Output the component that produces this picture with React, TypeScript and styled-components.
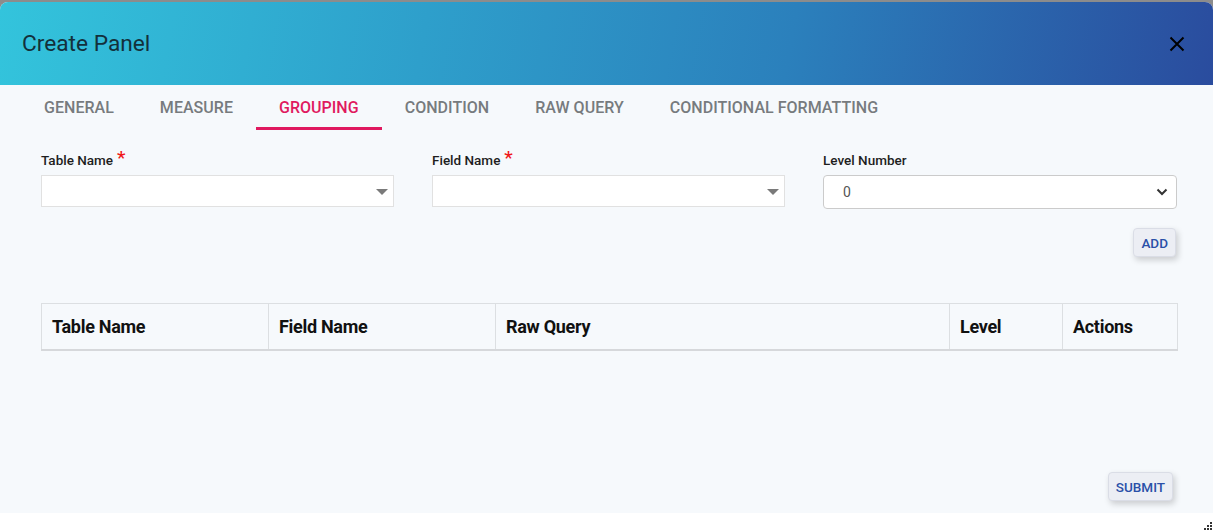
import React from "react";
import styled, { createGlobalStyle } from "styled-components";

const Global = createGlobalStyle`
  html, body { margin: 0; padding: 0; }
  body { font-family: Roboto, "Liberation Sans", Arial, sans-serif; background: #fff; }
  * { box-sizing: border-box; }
`;

const Page = styled.div`
  width: 1213px;
  height: 531px;
  display: flex;
  flex-direction: column;
  background: linear-gradient(to bottom, #8c8c8c 0, #8c8c8c 20px, #ffffff 20px);
  overflow: hidden;
`;

const Dialog = styled.div`
  margin-top: 2px;
  height: 511px;
  display: flex;
  flex-direction: column;
  border-radius: 8px 8px 0 0;
  overflow: hidden;
  background: #f6f9fc;
`;

const Header = styled.div`
  height: 83px;
  flex: none;
  display: flex;
  align-items: center;
  justify-content: space-between;
  padding: 0 24px 0 22px;
  background: linear-gradient(100deg, #33c4dc 0%, #2e9fcb 35%, #2b80bc 65%, #2a4c9e 100%);
`;

const Title = styled.h1`
  margin: 0;
  font-size: 22.7px;
  font-weight: 400;
  color: #13303b;
`;

const CloseButton = styled.button`
  border: 0;
  background: transparent;
  padding: 0;
  width: 24px;
  height: 24px;
  display: flex;
  align-items: center;
  justify-content: center;
  cursor: pointer;
`;

const TabBar = styled.div`
  height: 45px;
  flex: none;
  display: flex;
  padding-left: 21px;
`;

const Tab = styled.div<{ $active?: boolean }>`
  display: flex;
  align-items: center;
  padding: 2px 23px 0;
  font-size: 16px;
  font-weight: 500;
  letter-spacing: 0.03px;
  text-transform: uppercase;
  color: ${(p) => (p.$active ? "#e0195f" : "#777b7e")};
  border-bottom: 3px solid ${(p) => (p.$active ? "#e0195f" : "transparent")};
`;

const Content = styled.div`
  flex: 1;
  display: flex;
  flex-direction: column;
  padding: 22px 36px 12px 41px;
`;

const FormGrid = styled.div`
  display: grid;
  grid-template-columns: 353px 353px 354px;
  column-gap: 38px;
`;

const Field = styled.div`
  display: flex;
  flex-direction: column;
`;

const Label = styled.label`
  height: 23px;
  font-size: 13.5px;
  font-weight: 500;
  color: #1e1e1e;
  display: flex;
  align-items: flex-start;
  gap: 4px;
`;

const Star = styled.span`
  color: #f01818;
  font-size: 19px;
  line-height: 12px;
`;

const ComboBox = styled.div`
  height: 32px;
  background: #fff;
  border: 1px solid #e1e1e1;
  display: flex;
  align-items: center;
  justify-content: flex-end;
  padding-right: 4px;
`;

const Caret = styled.span`
  width: 0;
  height: 0;
  border-left: 6px solid transparent;
  border-right: 6px solid transparent;
  border-top: 6px solid #7a7a7a;
  margin-right: 1px;
  margin-top: 1px;
`;

const SelectBox = styled.div`
  height: 34px;
  background: #fff;
  border: 1px solid #cbcbcb;
  border-radius: 4px;
  display: flex;
  align-items: center;
  justify-content: space-between;
  padding: 0 8px 0 19px;
  font-size: 14px;
  color: #555;
`;

const ActionRow = styled.div<{ $top: number; $right: number }>`
  display: flex;
  justify-content: flex-end;
  margin-top: ${(p) => p.$top}px;
  padding-right: ${(p) => p.$right}px;
`;

const SmallButton = styled.button`
  height: 29px;
  padding: 0 7px;
  border: 1px solid #dadde6;
  border-radius: 4px;
  background: #eceef4;
  color: #2a50a8;
  font-family: Roboto, "Liberation Sans", Arial, sans-serif;
  font-size: 13.5px;
  font-weight: 500;
  box-shadow: 2px 3px 6px rgba(0, 0, 0, 0.18);
  cursor: pointer;
`;

const Table = styled.table`
  margin-top: 46px;
  width: 1136px;
  border-collapse: collapse;
  table-layout: fixed;
`;

const Th = styled.th<{ $w: number }>`
  width: ${(p) => p.$w}px;
  height: 46px;
  text-align: left;
  padding: 0 10px;
  font-size: 18px;
  font-weight: 700;
  color: #111;
  border: 1px solid #dcdfe2;
  border-bottom: 2px solid #d6d8db;
  letter-spacing: -0.3px;
`;

const Spacer = styled.div`
  flex: 1;
`;

const BottomStrip = styled.div`
  flex: 1;
  display: flex;
  justify-content: flex-end;
  align-items: flex-end;
  background: #fff;
  padding: 0 1px 1px 0;
`;

const Grip = styled.div`
  display: grid;
  grid-template-columns: repeat(4, 2px);
  grid-auto-rows: 2px;
  gap: 1px;
`;

const Dot = styled.span<{ $on: boolean }>`
  width: 2px;
  height: 2px;
  background: ${(p) => (p.$on ? "#333" : "transparent")};
`;

const tabs = ["General", "Measure", "Grouping", "Condition", "Raw Query", "Conditional Formatting"];
const cols: [string, number][] = [
  ["Table Name", 227],
  ["Field Name", 227],
  ["Raw Query", 454],
  ["Level", 113],
  ["Actions", 115],
];

const gripPattern = [
  0, 0, 0, 1,
  0, 0, 1, 1,
  0, 1, 1, 1,
];

export default function App() {
  return (
    <Page>
      <Global />
      <Dialog>
        <Header>
          <Title>Create Panel</Title>
          <CloseButton aria-label="close">
            <svg width="16" height="16" viewBox="0 0 16 16">
              <path d="M1.5 1.5 L14.5 14.5 M14.5 1.5 L1.5 14.5" stroke="#000" strokeWidth="2" />
            </svg>
          </CloseButton>
        </Header>
        <TabBar>
          {tabs.map((t) => (
            <Tab key={t} $active={t === "Grouping"}>
              {t}
            </Tab>
          ))}
        </TabBar>
        <Content>
          <FormGrid>
            <Field>
              <Label>
                Table Name <Star>*</Star>
              </Label>
              <ComboBox>
                <Caret />
              </ComboBox>
            </Field>
            <Field>
              <Label>
                Field Name <Star>*</Star>
              </Label>
              <ComboBox>
                <Caret />
              </ComboBox>
            </Field>
            <Field>
              <Label>Level Number</Label>
              <SelectBox>
                <span>0</span>
                <svg width="12" height="8" viewBox="0 0 12 8">
                  <path d="M1.5 1.5 L6 6 L10.5 1.5" stroke="#333" strokeWidth="2" fill="none" />
                </svg>
              </SelectBox>
            </Field>
          </FormGrid>
          <ActionRow $top={19} $right={1}>
            <SmallButton>ADD</SmallButton>
          </ActionRow>
          <Table>
            <thead>
              <tr>
                {cols.map(([c, w]) => (
                  <Th key={c} $w={w}>
                    {c}
                  </Th>
                ))}
              </tr>
            </thead>
          </Table>
          <Spacer />
          <ActionRow $top={0} $right={4}>
            <SmallButton>SUBMIT</SmallButton>
          </ActionRow>
        </Content>
      </Dialog>
      <BottomStrip>
        <Grip>
          {gripPattern.map((on, i) => (
            <Dot key={i} $on={on === 1} />
          ))}
        </Grip>
      </BottomStrip>
    </Page>
  );
}
